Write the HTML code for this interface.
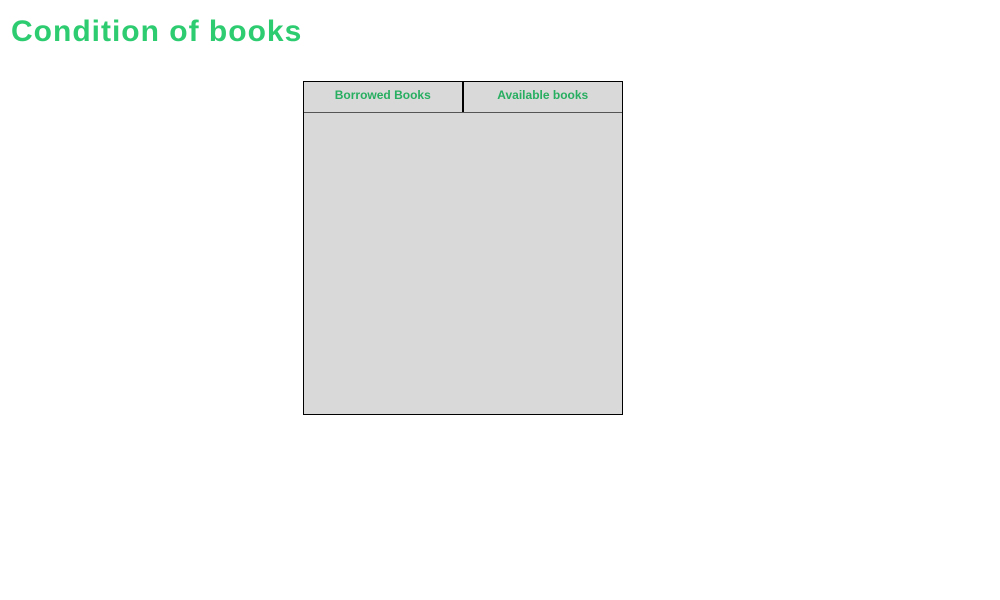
<html><head><style>
body{margin:0;background:#fff;font-family:"Liberation Sans",sans-serif;}
h1{position:absolute;left:11px;top:14px;margin:0;font-size:30px;line-height:36px;color:#2ecc71;font-weight:bold;letter-spacing:1px;}
.box{position:absolute;left:303px;top:81px;width:318px;height:332px;border:1px solid #000;background:#d9d9d9;}
.tabs{height:30px;border-bottom:1px solid #555;display:flex;}
.tab{width:159px;text-align:center;font-size:12px;font-weight:bold;color:#27ae60;line-height:26px;}
.tab:first-child{border-right:2px solid #000;width:158px;}
</style></head><body>
<h1>Condition of books</h1>
<div class="box"><div class="tabs"><div class="tab">Borrowed Books</div><div class="tab">Available books</div></div></div>
</body></html>
